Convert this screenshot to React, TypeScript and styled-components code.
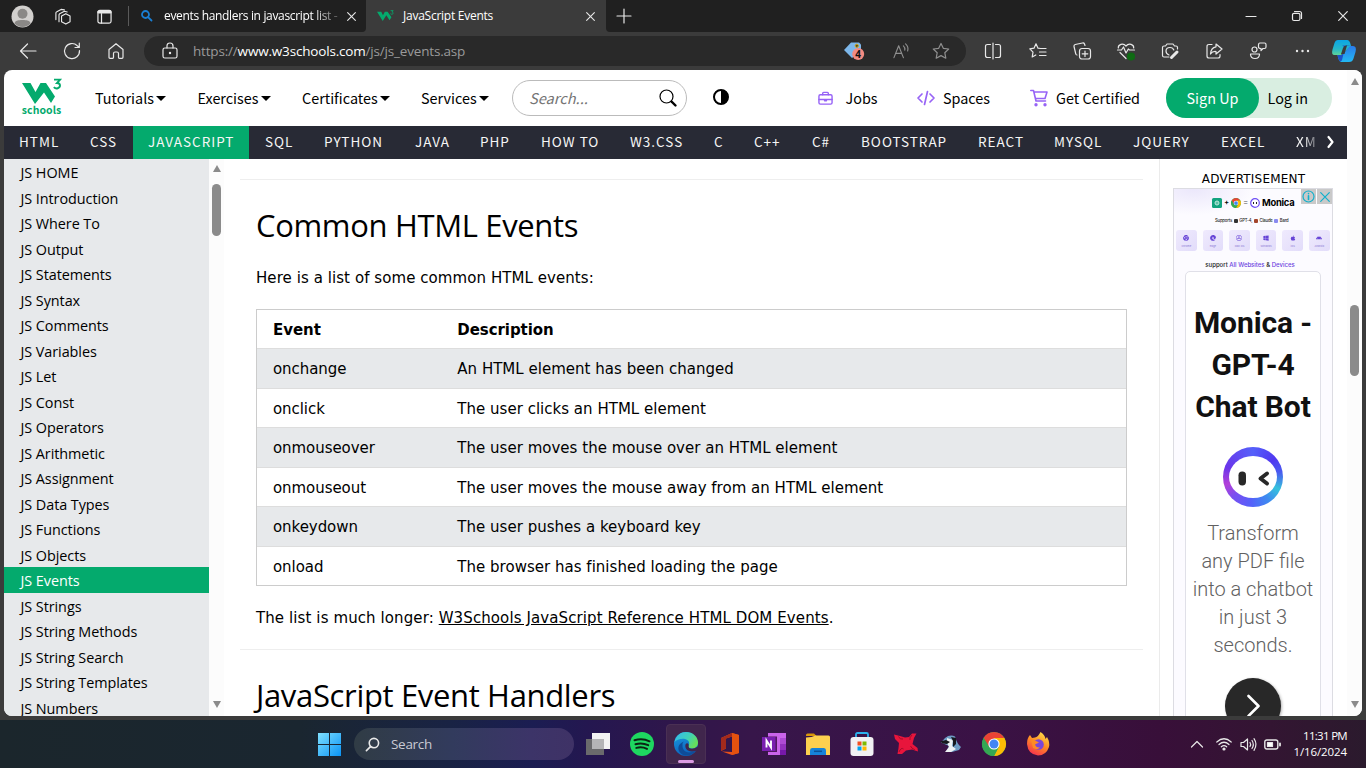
import React from "react";
import styled, { createGlobalStyle, css } from "styled-components";
import { FaAndroid, FaAppStore, FaApple, FaChrome, FaEdge, FaWindows } from "react-icons/fa";

const SOURCE = '"Noto Sans CJK SC", "Noto Sans", sans-serif';
const VERDANA = '"DejaVu Sans", sans-serif';
const SEGOE = '"Open Sans", "Noto Sans", sans-serif';

const Global = createGlobalStyle`
  * { box-sizing: border-box; }
  body { margin: 0; background: #3b3b3b; overflow: hidden; }
  svg { display: block; flex: none; overflow: visible; }
`;

const Screen = styled.div`
  width: 1366px;
  height: 768px;
  display: flex;
  flex-direction: column;
  overflow: hidden;
  background: #3b3b3b;
  font-family: ${SEGOE};
`;

const Icon = styled.svg.attrs({ fill: "none", strokeLinecap: "round", strokeLinejoin: "round" })<{ $size?: number; $color?: string; $stroke?: number }>`
  width: ${(p) => p.$size ?? 18}px;
  height: ${(p) => p.$size ?? 18}px;
  stroke: ${(p) => p.$color ?? "#e8e8e8"};
  stroke-width: ${(p) => p.$stroke ?? 1.2};
`;

const Slot = styled.div<{ $w: number; $lift?: number }>`
  width: ${(p) => p.$w}px;
  flex: none;
  display: flex;
  align-items: center;
  justify-content: center;
  height: 100%;
  padding-bottom: ${(p) => p.$lift ?? 0}px;
`;

/* ---------- tab strip ---------- */
const TabStrip = styled.header`
  height: 32px;
  flex: none;
  display: flex;
  background: #3b3b3b;
`;
const StripLeft = styled.div`
  width: 366px;
  height: 32px;
  display: flex;
  align-items: center;
  background: #202020;
  border-bottom-right-radius: 4px;
`;
const StripRight = styled.div`
  flex: 1;
  height: 32px;
  display: flex;
  align-items: center;
  background: #202020;
  border-bottom-left-radius: 4px;
`;
const StripSpace = styled.div`
  flex: 1;
`;
const StripDivider = styled.div`
  width: 1px;
  height: 20px;
  background: #5a5a5a;
`;
const TabTitle = styled.div<{ $w: number; $pad: number; $fade?: boolean; $ls: number }>`
  width: ${(p) => p.$w}px;
  flex: none;
  padding-left: ${(p) => p.$pad}px;
  white-space: pre;
  font-size: 12px;
  line-height: 18px;
  letter-spacing: ${(p) => p.$ls}px;
  color: #fff;
  ${(p) => p.$fade && css`mask-image: linear-gradient(90deg, #000 82%, rgba(0, 0, 0, 0.3) 94%);`}
`;
const BackTab = styled.div`
  display: flex;
  align-items: center;
  padding-left: 12px;
  width: 238px;
`;
const ActiveTab = styled.div`
  width: 240px;
  height: 32px;
  display: flex;
  align-items: center;
  padding-left: 11px;
  background: #3b3b3b;
`;

/* ---------- toolbar ---------- */
const Toolbar = styled.div`
  height: 38px;
  flex: none;
  display: flex;
  align-items: center;
  padding-left: 6px;
`;
const AddressBar = styled.div`
  width: 822px;
  height: 30px;
  margin: 0 5px 0 6px;
  border-radius: 15px;
  background: #292929;
  display: flex;
  align-items: center;
  padding-left: 17px;
`;
const Url = styled.div`
  width: 651px;
  margin-left: 14px;
  font-size: 13.5px;
  line-height: 20px;
  letter-spacing: -0.18px;
  color: #9a9a9a;
  white-space: nowrap;
  b { font-weight: 400; color: #fff; }
`;

/* ---------- page ---------- */
const Page = styled.main`
  width: 1358px;
  height: 646px;
  margin: 0 4px 4px;
  flex: none;
  display: flex;
  background: #fff;
  border-radius: 8px;
  overflow: hidden;
`;
const PageColumn = styled.div`
  width: 1343px;
  display: flex;
  flex-direction: column;
`;
const SiteHeader = styled.div`
  height: 56px;
  flex: none;
  display: flex;
  align-items: center;
  font-family: ${SOURCE};
  font-size: 14.4px;
  color: #000;
`;
const Logo = styled.div`
  width: 91px;
  padding-left: 17px;
`;
const MenuItem = styled.div<{ $w: number; $gap?: number }>`
  width: ${(p) => p.$w}px;
  flex: none;
  display: flex;
  align-items: center;
  gap: ${(p) => p.$gap ?? 2}px;
  line-height: 20px;
  white-space: nowrap;
`;
const Caret = styled.i`
  border: 5px solid transparent;
  border-top: 5px solid #000;
  border-bottom: 0;
`;
const SearchBox = styled.div`
  width: 175px;
  height: 36px;
  flex: none;
  border: 1px solid #bbb;
  border-radius: 18px;
  display: flex;
  align-items: center;
  justify-content: space-between;
  padding: 0 9px 0 16px;
  font-size: 14.6px;
  line-height: 20px;
  font-style: italic;
  color: #757575;
`;
const Auth = styled.div`
  width: 166px;
  height: 40px;
  display: flex;
  align-items: center;
  line-height: 20px;
  background: #d9eee1;
  border-radius: 20px;
`;
const SignUp = styled.div`
  width: 93px;
  height: 40px;
  line-height: 40px;
  margin-right: 8.5px;
  text-align: center;
  color: #fff;
  background: #04aa6d;
  border-radius: 20px;
`;

const TopicBar = styled.nav`
  height: 33px;
  flex: none;
  display: flex;
  background: #282a35;
  font-family: ${SOURCE};
  font-size: 13.5px;
`;
const Topic = styled.div<{ $w: number; $active?: boolean; $cut?: boolean }>`
  width: ${(p) => p.$w}px;
  height: 33px;
  flex: none;
  padding-left: 15px;
  line-height: 31px;
  letter-spacing: 1px;
  white-space: nowrap;
  color: #f6f6f6;
  ${(p) => p.$active && css`background: #04aa6d; margin-right: 1px;`}
  ${(p) => p.$cut && css`mask-image: linear-gradient(90deg, #000 62%, rgba(0, 0, 0, 0.3));`}
`;

const Body = styled.div`
  flex: 1;
  min-height: 0;
  display: flex;
`;
const Sidebar = styled.div`
  width: 205px;
  flex: none;
  background: #e7e9eb;
  overflow: hidden;
`;
const SideLink = styled.div<{ $active?: boolean }>`
  height: 25.5px;
  padding-left: 16.5px;
  font-size: 14.4px;
  line-height: 27px;
  letter-spacing: -0.06px;
  color: ${(p) => (p.$active ? "#fff" : "#000")};
  background: ${(p) => (p.$active ? "#04aa6d" : "transparent")};
  white-space: nowrap;
`;

const ScrollTrack = styled.div`
  width: 15px;
  flex: none;
  display: flex;
  flex-direction: column;
  align-items: center;
  background: #fcfcfc;
`;
const ScrollArrow = styled.i<{ $down?: boolean; $top: number }>`
  margin-top: ${(p) => p.$top}px;
  border: 4.5px solid transparent;
  ${(p) => (p.$down ? "border-top: 7px solid #8b8b8b; border-bottom: 0;" : "border-bottom: 7px solid #8b8b8b; border-top: 0;")}
`;
const ScrollThumb = styled.div<{ $top: number; $h: number }>`
  width: 9px;
  height: ${(p) => p.$h}px;
  margin-top: ${(p) => p.$top}px;
  border-radius: 4.5px;
  background: #8b8b8b;
`;

const Content = styled.div`
  width: 936px;
  flex: none;
  padding: 20px 16px 0 16px;
  overflow: hidden;
  font-family: ${VERDANA};
  font-size: 15px;
  color: #000;
  border-right: 1px solid #ebebeb;
`;
const Rule = styled.div`
  height: 1px;
  background: #eee;
`;
const Heading = styled.h2`
  margin: 0;
  padding: 21px 0 1px 16px;
  font: 400 31px/48px ${SEGOE};
  letter-spacing: -0.34px;
  white-space: nowrap;
`;
const Para = styled.p<{ $top: number; $bottom: number; $ls: number }>`
  margin: ${(p) => `${p.$top}px 0 ${p.$bottom}px 16px`};
  line-height: 22px;
  letter-spacing: ${(p) => p.$ls}px;
  white-space: nowrap;
`;
const EventTable = styled.div`
  width: 871px;
  margin-left: 16px;
  border: 1px solid #ccc;
`;
const EventRow = styled.div<{ $shade?: boolean; $head?: boolean }>`
  display: flex;
  height: ${(p) => (p.$head ? 39 : 39.5)}px;
  padding-left: 16px;
  line-height: 41px;
  letter-spacing: ${(p) => (p.$head ? -0.06 : 0.02)}px;
  border-bottom: 1px solid #ddd;
  background: ${(p) => (p.$shade ? "#e7e9eb" : "#fff")};
  font-weight: ${(p) => (p.$head ? 700 : 400)};
  &:last-child { border-bottom: 0; height: 38.5px; }
`;
const EventName = styled.span`
  width: 184.3px;
  letter-spacing: -0.06px;
`;

/* ---------- advert ---------- */
const AdColumn = styled.aside`
  flex: 1;
  padding: 13px 14px 0 13px;
  overflow: hidden;
`;
const AdLabel = styled.div`
  margin-bottom: 2px;
  padding-left: 1px;
  text-align: center;
  font: 12px/14px ${VERDANA};
  letter-spacing: 0.2px;
`;
const AdFrame = styled.div`
  width: 160px;
  height: 600px;
  position: relative;
  border: 1px solid #dcdce2;
  background: radial-gradient(ellipse 60px 26px at 20px 0, #ebe7fb, rgba(252, 251, 255, 0)) #fcfbff;
  font-family: Roboto, sans-serif;
`;
const AdBadges = styled.div`
  position: absolute;
  top: 0;
  right: 0;
  display: flex;
  gap: 1px;
`;
const AdBadge = styled.div`
  width: 15px;
  height: 15px;
  background: #c9c9c9;
  display: flex;
  align-items: center;
  justify-content: center;
`;
const AdBrand = styled.div`
  display: flex;
  align-items: center;
  padding: 7px 0 0 38px;
  height: 20px;
  gap: 2px;
  font: 700 9.4px/12px Inter, sans-serif;
  letter-spacing: -0.25px;
`;
const AdMark = styled.span<{ $c: string }>`
  width: 5px;
  font-size: 7px;
  text-align: center;
  color: ${(p) => p.$c};
`;
const AdSupports = styled.div`
  display: flex;
  align-items: center;
  gap: 1.6px;
  height: 10px;
  margin: 7px 0 0 41px;
  font: 500 4.2px/6px Inter, sans-serif;
  letter-spacing: -0.16px;
  color: #222;
`;
const Dot = styled.i<{ $c: string }>`
  width: 4px;
  height: 4px;
  border-radius: 1px;
  background: ${(p) => p.$c};
`;
const AdTiles = styled.div`
  display: flex;
  gap: 6px;
  margin: 4px 0 0 2px;
`;
const AdTile = styled.div`
  width: 20.6px;
  height: 21px;
  flex: none;
  border-radius: 3px;
  background: linear-gradient(135deg, #efeafd, #e2dcfa);
  display: flex;
  flex-direction: column;
  align-items: center;
  padding-top: 5px;
  gap: 3px;
  font: 2.6px/4px Inter, sans-serif;
  color: #8a76d4;
`;
const AdDevices = styled.div`
  margin-top: 10px;
  text-align: center;
  padding-right: 6px;
  font: 500 6px/8px Inter, sans-serif;
  color: #222;
  span { color: #6b3fe0; }
`;
const AdCard = styled.div`
  width: 136px;
  height: 520px;
  margin: 2px 0 0 11px;
  padding-top: 30px;
  display: flex;
  flex-direction: column;
  align-items: center;
  border: 1px solid #e0e0e8;
  border-radius: 5px 5px 0 0;
  background: #fff;
`;
const AdTitle = styled.div`
  font-weight: 700;
  font-size: 30px;
  line-height: 42px;
  letter-spacing: -0.1px;
  text-align: center;
  white-space: pre;
  color: #111;
  margin-bottom: 19px;
`;
const AdText = styled.div`
  margin: 12px 0 19px;
  font-weight: 300;
  font-size: 20px;
  line-height: 28px;
  text-align: center;
  white-space: pre;
  color: #616161;
`;
const AdGo = styled.div`
  width: 56px;
  height: 56px;
  flex: none;
  border-radius: 50%;
  background: #282828;
  display: flex;
  align-items: center;
  justify-content: center;
  box-shadow: 1px 1px 3px rgba(0, 0, 0, 0.3);
`;
const FaceRing = styled.div`
  width: 60px;
  height: 60px;
  flex: none;
  border-radius: 50%;
  display: flex;
  align-items: center;
  justify-content: center;
  background: conic-gradient(#5560fa, #5038f0 50deg, #4a5cf0 80deg, #35c2dc 115deg, #3d8cf0 145deg, #5560fa 185deg, #7a4ef0 225deg, #b23fd8 255deg, #6a35ea 290deg, #5560fa);
`;

/* ---------- taskbar ---------- */
const Taskbar = styled.footer`
  height: 48px;
  flex: none;
  display: flex;
  align-items: center;
  padding-left: 306px;
  background: linear-gradient(90deg, #1b262c 0, #1a2630 22%, #192344 33%, #1b1d52 39%, #241750 43%, #30164a 50%, #37164a 55%, #3a1245 72%, #380f39 85%, #331532 93%, #2b1a2d);
`;
const TaskSearch = styled.div`
  width: 220px;
  height: 32px;
  flex: none;
  margin: 0 2px;
  border-radius: 16px;
  background: linear-gradient(90deg, #303c45, #323b5d 45%, #3c3468 80%, #3f3266);
  display: flex;
  align-items: center;
  gap: 11px;
  padding-left: 11px;
  font-size: 13.5px;
  letter-spacing: -0.3px;
  color: #c9cad3;
`;
const TaskApp = styled.div`
  width: 44px;
  height: 40px;
  flex: none;
  display: flex;
  align-items: center;
  justify-content: center;
`;
const ActiveApp = styled.div`
  width: 40px;
  height: 40px;
  border-radius: 4px;
  border: 1px solid #4a3054;
  background: #40264c;
  display: flex;
  flex-direction: column;
  align-items: center;
  padding-top: 7px;
  gap: 4px;
`;
const ActiveMark = styled.div`
  width: 16px;
  height: 3px;
  border-radius: 2px;
  background: #dc9be4;
`;
const Tray = styled.div`
  margin-left: auto;
  padding-right: 19px;
  display: flex;
  align-items: center;
`;
const Clock = styled.div`
  width: 60px;
  text-align: right;
  font-size: 11.5px;
  line-height: 16px;
  color: #fff;
  white-space: nowrap;
`;
const ClockLine = styled.div<{ $ls: number }>`
  letter-spacing: ${(p) => p.$ls}px;
`;

const topics: [string, number][] = [
  ["HTML", 71], ["CSS", 58], ["JAVASCRIPT", 116], ["SQL", 59], ["PYTHON", 91], ["JAVA", 65], ["PHP", 61],
  ["HOW TO", 89], ["W3.CSS", 84], ["C", 40], ["C++", 58], ["C#", 49], ["BOOTSTRAP", 117], ["REACT", 76],
  ["MYSQL", 79], ["JQUERY", 88], ["EXCEL", 75], ["XM", 36],
];

const sideLinks = [
  "HOME", "Introduction", "Where To", "Output", "Statements", "Syntax", "Comments", "Variables", "Let", "Const",
  "Operators", "Arithmetic", "Assignment", "Data Types", "Functions", "Objects", "Events", "Strings",
  "String Methods", "String Search", "String Templates", "Numbers",
];

const events = [
  ["onchange", "An HTML element has been changed"],
  ["onclick", "The user clicks an HTML element"],
  ["onmouseover", "The user moves the mouse over an HTML element"],
  ["onmouseout", "The user moves the mouse away from an HTML element"],
  ["onkeydown", "The user pushes a keyboard key"],
  ["onload", "The browser has finished loading the page"],
];

const CloseIcon = ({ size = 9, color = "#e8e8e8" }) => (
  <Icon viewBox="0 0 10 10" $size={size} $color={color}><path d="M.7.7l8.6 8.6M9.3.7L.7 9.3" /></Icon>
);

const W3Mark = ({ width = 40, height = 28 }) => (
  <svg width={width} height={height} viewBox="0 0 40 28" fill="none">
    <path d="M0 4H10L14 12 18.5 4H25L34 17 29.5 24 22 12 13.5 26Z" fill="#04aa6d" />
    <path d="M32 1.3H38L35 4.7C37.3 4.7 38 6 38 7.3 38 9.8 34 11 31.8 8.6" stroke="#04aa6d" strokeWidth="1.9" />
  </svg>
);

const Chrome = ({ size = 24 }) => (
  <svg width={size} height={size} viewBox="0 0 24 24">
    <circle cx="12" cy="12" r="12" fill="#34a853" />
    <path d="M1.600 6A12 12 0 0 1 22.400 6L12 7 7 15Z" fill="#ea4335" />
    <path d="M22.400 6A12 12 0 0 1 12 24L17 14.500 12 6Z" fill="#fbbc05" />
    <path d="M1.600 6A12 12 0 0 0 12 24L16.700 15 7.300 15Z" fill="#34a853" />
    <circle cx="12" cy="12" r="5.600" fill="#fff" />
    <circle cx="12" cy="12" r="4.500" fill="#4285f4" />
  </svg>
);

const Edge = () => (
  <svg width="24" height="24" viewBox="0 0 24 24">
    <defs>
      <linearGradient id="e1" x1="0" y1="0" x2="1" y2=".5"><stop stopColor="#35b8f0" /><stop offset=".6" stopColor="#3fd0b8" /><stop offset="1" stopColor="#66e05b" /></linearGradient>
      <linearGradient id="e2" x1="0" y1="0" x2=".4" y2="1"><stop stopColor="#1b9de2" /><stop offset="1" stopColor="#0b62bd" /></linearGradient>
    </defs>
    <circle cx="12" cy="12" r="12" fill="url(#e2)" />
    <path d="M.5 10C2 3 7 0 12 0c7 0 12 5 12 10.500 0 4-3 6-6 6-2.600 0-4-1-3.500-2.500C16 12 15.500 7.500 10 6.800 6 6.500 2 8 .5 10Z" fill="url(#e1)" />
    <path d="M8.500 12.500C8 19 13 22.500 21.500 19 18 24 11 25 7 21.500 2.500 17.500 4 11.500 10 9.500 8.800 10.500 8.500 11.500 8.500 12.500Z" fill="#0f4c98" />
    <path d="M14.600 14C14 16 17 17.400 20.500 16.200L24 14.500V18L21.500 19C14 21 10.500 16.500 11.500 12.500 12.500 10.500 15.200 11 14.600 14Z" fill="#40264c" />
  </svg>
);

const TabBar = () => (
  <TabStrip>
    <StripLeft>
      <Slot $w={44}>
        <svg width="23" height="23" viewBox="0 0 23 23">
          <circle cx="11.500" cy="11.500" r="11" fill="#d2d0ce" />
          <circle cx="11.500" cy="8.800" r="5" fill="#8a8886" />
          <path d="M3.500 18.500C4 15.500 7 15 11.500 15s7.500.5 8 3.500A11 11 0 0 1 3.500 18.500Z" fill="#8a8886" />
        </svg>
      </Slot>
      <Slot $w={36}>
        <Icon viewBox="0 0 18 18" $size={17}>
          <path d="M8 8.500L12.500 6 17 8.500V14.500L12.500 17 8 14.500ZM5.300 14.600V7.500Q5.300 6.500 6 6L11 3.500 14 4.200M2 12.300V5.300Q2 4.500 3 4L7.500 1.500 11 2" />
        </Icon>
      </Slot>
      <Slot $w={48}>
        <Icon viewBox="0 0 16 16" $size={15} $stroke={1.3}><rect x="1" y="1.500" width="14" height="13.500" rx="2" /><path d="M2 3.200H14" strokeWidth="3.400" /><path d="M4.800 5V15" /></Icon>
      </Slot>
      <StripDivider />
      <BackTab>
        <Icon viewBox="0 0 12 12" $size={12} $color="#1a7fd4" $stroke={1.8}><circle cx="4.500" cy="4.500" r="3.500" /><path d="M7.300 7.300L10.500 10.500" /></Icon>
        <TabTitle $w={194} $pad={11} $ls={-0.33} $fade>events handlers in javascript list -</TabTitle>
        <CloseIcon />
      </BackTab>
    </StripLeft>
    <ActiveTab>
      <W3Mark width={17} height={12} />
      <TabTitle $w={192} $pad={9} $ls={-0.25}>JavaScript Events</TabTitle>
      <CloseIcon />
    </ActiveTab>
    <StripRight>
      <Slot $w={35}><Icon viewBox="0 0 14 14" $size={14}><path d="M7 0V14M0 7H14" /></Icon></Slot>
      <StripSpace />
      <Slot $w={46}><Icon viewBox="0 0 10 10" $size={10}><path d="M0 5.500H10" /></Icon></Slot>
      <Slot $w={46}><Icon viewBox="0 0 10 10" $size={10}><rect x=".5" y="2.300" width="7.400" height="7.200" rx="1.500" /><path d="M2.500.5H7.500Q9.500.5 9.500 2.500V7.500" /></Icon></Slot>
      <Slot $w={46}><CloseIcon size={10} /></Slot>
    </StripRight>
  </TabStrip>
);

const Copilot = () => (
  <svg width="24" height="22" viewBox="0 0 24 22">
    <defs>
      <linearGradient id="c1" x1="0" y1="0" x2="0" y2="1"><stop stopColor="#0aa5e6" /><stop offset=".6" stopColor="#27b7c8" /><stop offset="1" stopColor="#5fd597" /></linearGradient>
      <linearGradient id="c2" x1="0" y1="0" x2="0" y2="1"><stop stopColor="#2a7bea" /><stop offset="1" stopColor="#23b9f2" /></linearGradient>
    </defs>
    <path d="M6 0H15Q17.500 0 18.500 4L19 6 9 15H3Q-1 15.500 .5 9.500L2.500 3Q3.500 0 6 0Z" fill="url(#c1)" />
    <path d="M18 6H21Q25 6 23.500 12L21.500 18.500Q20.500 22 17 22H9Q6.500 21 5.500 15H10Z" fill="url(#c2)" />
    <path d="M5.500 15H10L12 9Q12.500 6 10 5.500H19L15 6Q13.500 6 12.500 10L10.500 18Q10 21.500 8 21.500 6.500 20 5.500 15Z" fill="#1c52c8" />
    <path d="M11 8Q12 5 15 5.500L12.500 14H9Z" fill="#3b3b3b" />
  </svg>
);

const PriceTag = styled.svg`
  margin-right: 5px;
`;

const AddressRow = () => (
  <Toolbar>
    <Slot $w={44}><Icon viewBox="0 0 18 18"><path d="M17 9H1.500M8.500 2L1.500 9 8.500 16" /></Icon></Slot>
    <Slot $w={44}><Icon viewBox="0 0 18 18"><path d="M16.500 8.500A7.500 7.500 0 1 1 14.300 3.700L16 5.300M16.300 1.200V5.500H12" /></Icon></Slot>
    <Slot $w={44}><Icon viewBox="0 0 18 18"><path d="M2 7.500L9 1.700 16 7.500V15.300Q16 16.300 15 16.300H12.300Q11.500 16.300 11.500 15.300V11.500Q11.500 10 10 10H8Q6.500 10 6.500 11.500V15.300Q6.500 16.300 5.700 16.300H3Q2 16.300 2 15.300Z" /></Icon></Slot>
    <AddressBar>
      <Icon viewBox="0 0 18 18"><rect x="2" y="6" width="14" height="10" rx="1.800" /><path d="M6 6V4Q6 1 9 1T12 4V6" /><circle cx="9" cy="11" r=".6" fill="#e8e8e8" /></Icon>
      <Url>https://<b>www.w3schools.com</b>/js/js_events.asp</Url>
      <PriceTag width="22" height="20" viewBox="0 0 22 20">
        <path d="M0 9L7 1.500H15L17 3.500V10L8 17Z" fill="#7db7ea" />
        <circle cx="12.800" cy="4.800" r="1.600" fill="#4b4f2a" stroke="#d9a514" />
        <circle cx="14.200" cy="13" r="6" fill="#f28b82" />
        <text x="14.200" y="16.700" fontSize="10" fontWeight="700" textAnchor="middle" fill="#111">4</text>
      </PriceTag>
      <Slot $w={60}><Icon viewBox="0 0 18 18" $size={17} $color="#8f8f8f"><path d="M1 15.500L6 3 11 15.500M2.800 11H9.200M11 3Q13 4.800 12.500 7.500M13.300 1Q16.800 4 15.500 8.500" /></Icon></Slot>
      <Slot $w={19}><Icon viewBox="0 0 18 18" $color="#8f8f8f"><path d="M9 1.500L11.300 6.300 16.700 7 12.800 10.700 13.800 16.200 9 13.600 4.200 16.200 5.200 10.700 1.300 7 6.700 6.300Z" /></Icon></Slot>
    </AddressBar>
    <Slot $w={44}><Icon viewBox="0 0 18 18"><path d="M6.500 2.500H3.500Q1.500 2.500 1.500 4.500V13.500Q1.500 15.500 3.500 15.500H6.500M11.500 2.500H14.500Q16.500 2.500 16.500 4.500V13.500Q16.500 15.500 14.500 15.500H11.500M9 1V17" /></Icon></Slot>
    <Slot $w={45}><Icon viewBox="0 0 18 18"><path d="M11.500 6.500L9 6.200 7 1.800 5 6.200 .8 6.800 4 10.200 3.200 15 6.800 13M11.500 6.500H17M10.500 10H17M10.500 13.500H17" /></Icon></Slot>
    <Slot $w={44}><Icon viewBox="0 0 18 18"><rect x="6.500" y="6.500" width="11" height="10.500" rx="2.500" /><path d="M12 9V14.500M9.200 11.800H14.800M4 13Q3 13 2.800 12L1 4.500Q.7 3 2.200 2.500L9.500 1Q11 .7 11.500 2L12 3.500" /></Icon></Slot>
    <Slot $w={44}><Icon viewBox="0 0 18 18"><path d="M1.300 6C1 2.500 6 .5 9 4 12 .5 17 2.500 16.700 6M3 10.500L9 16.500M.5 8H4.500L6.500 5 9 11 11.300 7 12.500 8H17.500" /><circle cx="14" cy="14.500" r="3.500" fill="#0f6b14" stroke="#0f6b14" /></Icon></Slot>
    <Slot $w={44}><Icon viewBox="0 0 18 18"><path d="M8 15H3Q1.500 15 1.500 13.500V5.500Q1.500 4 3 4H4.500L6 2H12L13.500 4H15Q16.500 4 16.500 5.500V7M8 13Q5 12 5 9 5 5.500 9 5.500 12 5.500 12.800 8" /><path d="M10.500 15.500L16 10" strokeWidth="3" /></Icon></Slot>
    <Slot $w={44}><Icon viewBox="0 0 18 18"><path d="M7 2.500H4Q2 2.500 2 4.500V14Q2 16 4 16H13Q15 16 15 14V12.500M11 2L17 7 11 12V9.500Q7.500 9 5.500 12 6 5.500 11 4.800Z" /></Icon></Slot>
    <Slot $w={44}><Icon viewBox="0 0 18 18"><circle cx="5.500" cy="7.500" r="2.500" /><path d="M1.500 12H10.500Q10.500 16.500 6 16.500T1.500 12ZM9.500 3Q9.500 1 11 1H15.500Q17 1 17 2.500V5Q17 6.500 15.500 6.500H14L12 8.500V6.500Q9.500 6.500 9.500 5Z" /></Icon></Slot>
    <Slot $w={43}><Icon viewBox="0 0 18 18"><g fill="#e8e8e8" stroke="none"><circle cx="4" cy="9" r="1.200" /><circle cx="9.500" cy="9" r="1.200" /><circle cx="15" cy="9" r="1.200" /></g></Icon></Slot>
    <Slot $w={42}><Copilot /></Slot>
  </Toolbar>
);

const violet = "#9763f6";

const Header = () => (
  <SiteHeader>
    <Logo>
      <svg width="42" height="40" viewBox="0 0 42 40">
        <g transform="translate(1 1)">
          <path d="M0 4H8.500L13.500 13 18.500 4H24L33 17.500 29 24 22 13.500 13 25Z" fill="#04aa6d" />
          <path d="M32 .6H38L35 4C37.300 4 38 5.400 38 6.600 38 9.400 34 10.400 31.800 8.200" stroke="#04aa6d" strokeWidth="1.900" fill="none" />
        </g>
        <text x="0.800" y="36" fontSize="10.500" fontWeight="700" fill="#04aa6d" textLength="39.500" fontFamily={SOURCE}>schools</text>
      </svg>
    </Logo>
    <MenuItem $w={102.5}>Tutorials<Caret /></MenuItem>
    <MenuItem $w={104.5}>Exercises<Caret /></MenuItem>
    <MenuItem $w={119}>Certificates<Caret /></MenuItem>
    <MenuItem $w={91}>Services<Caret /></MenuItem>
    <SearchBox>
      Search...
      <Icon viewBox="0 0 18 18" $color="#000"><circle cx="7.500" cy="7.500" r="6.500" /><path d="M12.500 12.500L16.500 16.500" strokeWidth="2.400" /></Icon>
    </SearchBox>
    <Slot $w={68} $lift={2}>
      <svg width="16" height="16" viewBox="0 0 16 16"><circle cx="8" cy="8" r="7" fill="#fff" stroke="#000" strokeWidth="2" /><path d="M8 1A7 7 0 0 1 8 15Z" fill="#000" /></svg>
    </Slot>
    <Slot $w={63} />
    <MenuItem $w={99} $gap={12.5}>
      <Icon viewBox="0 0 16 16" $size={15} $color={violet} $stroke={1.5}><rect x="1" y="4" width="14" height="10" rx="1.500" /><path d="M5 4V2.500Q5 1.500 6 1.500H10Q11 1.500 11 2.500V4M1 9H15M7 9V10.500H9V9" /></Icon>Jobs
    </MenuItem>
    <MenuItem $w={113} $gap={8}>
      <Icon viewBox="0 0 18 16" $size={18} $color={violet} $stroke={1.7}><path d="M5 4L1 8 5 12M13 4L17 8 13 12M10.500 1.500L7.500 14.500" /></Icon>Spaces
    </MenuItem>
    <MenuItem $w={136} $gap={8}>
      <Icon viewBox="0 0 18 18" $color={violet} $stroke={1.6}><path d="M.8 1.500H3.500L6 12H15.500M3.700 3H17L15 9.500H5.500" /><circle cx="6" cy="15.800" r=".9" fill={violet} /><circle cx="15" cy="15.800" r=".9" fill={violet} /></Icon>Get Certified
    </MenuItem>
    <Auth><SignUp>Sign Up</SignUp>Log in</Auth>
  </SiteHeader>
);

const platforms = [
  { name: "Chrome", Glyph: FaChrome },
  { name: "Edge", Glyph: FaEdge },
  { name: "Mac OS", Glyph: FaAppStore },
  { name: "Windows", Glyph: FaWindows },
  { name: "iOS", Glyph: FaApple },
  { name: "Android", Glyph: FaAndroid },
];

const MonicaFace = () => (
  <FaceRing>
    <svg width="48" height="42" viewBox="0 0 48 42">
      <ellipse cx="24" cy="21" rx="24" ry="21" fill="#fff" />
      <rect x="9.500" y="15.500" width="7.500" height="14" rx="3.700" fill="#282828" />
      <path d="M38 17.500L31.500 22.500 38 27.500" fill="none" stroke="#282828" strokeWidth="4" strokeLinecap="round" strokeLinejoin="round" />
    </svg>
  </FaceRing>
);

const Advert = () => (
  <AdColumn>
    <AdLabel>ADVERTISEMENT</AdLabel>
    <AdFrame>
      <AdBadges>
        <AdBadge><Icon viewBox="0 0 13 13" $size={13} $color="#12b0cc"><circle cx="6.500" cy="6.500" r="5.500" /><path d="M6.500 5.800V9.500M6.500 3.500V3.600" strokeWidth="1.600" /></Icon></AdBadge>
        <AdBadge><CloseIcon size={10} color="#12b0cc" /></AdBadge>
      </AdBadges>
      <AdBrand>
        <svg width="10" height="10" viewBox="0 0 10 10"><rect width="10" height="10" rx="1.500" fill="#12a37f" /><circle cx="5" cy="5" r="2" fill="#5cc2a8" stroke="#bfe9dd" /></svg>
        <AdMark $c="#000">+</AdMark>
        <Chrome size={10} />
        <AdMark $c="#888">=</AdMark>
        <svg width="10" height="10" viewBox="0 0 10 10"><circle cx="5" cy="5" r="4.300" fill="#fff" stroke="#6c4df5" strokeWidth="1.200" /><path d="M3.500 4V6M6.500 4V6" stroke="#222" /></svg>
        Monica
      </AdBrand>
      <AdSupports>Supports <Dot $c="#333" /> GPT-4, <Dot $c="#a3452c" /> Claude <Dot $c="#8a8af0" /> Bard</AdSupports>
      <AdTiles>
        {platforms.map(({ name, Glyph }) => (
          <AdTile key={name}><Glyph size={6} color="#6644d6" />{name}</AdTile>
        ))}
      </AdTiles>
      <AdDevices>support <span>All Websites</span> &amp; <span>Devices</span></AdDevices>
      <AdCard>
        <AdTitle>{"Monica -\nGPT-4\nChat Bot"}</AdTitle>
        <MonicaFace />
        <AdText>{"Transform\nany PDF file\ninto a chatbot\nin just 3\nseconds."}</AdText>
        <AdGo><Icon viewBox="0 0 24 24" $size={24} $color="#fff" $stroke={2.6}><path d="M7.500 2L17.500 12 7.500 22" /></Icon></AdGo>
      </AdCard>
    </AdFrame>
  </AdColumn>
);

const TaskIcons = () => (
  <>
    <TaskApp><svg width="24" height="24" viewBox="0 0 24 24"><path d="M6 1H24V17H6Z" fill="#f2f2f2" /><path d="M0 7H18V23H0Z" fill="#6a6a6c" /><path d="M6 7H18V17H6Z" fill="#b4b4b6" /></svg></TaskApp>
    <TaskApp><svg width="24" height="24" viewBox="0 0 24 24"><circle cx="12" cy="12" r="12" fill="#1ed760" /><path d="M4.500 8.300Q12.500 5.800 19.500 9.300M5.500 12.200Q12 10.200 18.200 13.200M6.300 15.900Q12 14.300 17 16.900" fill="none" stroke="#0b2414" strokeWidth="2" strokeLinecap="round" /></svg></TaskApp>
    <TaskApp><ActiveApp><Edge /><ActiveMark /></ActiveApp></TaskApp>
    <TaskApp><svg width="20" height="24" viewBox="0 0 20 24"><path d="M1 6L12 1 19 3V21L12 23 2 19.500 12 20V4.500L6 6.500V16.500L1 19Z" fill="#e8501a" /><path d="M1 6L12 1V4.500L6 6.500V16.500L1 19Z" fill="#a32a1c" /><path d="M12 1L19 3V21L12 23Z" fill="#e5520f" /></svg></TaskApp>
    <TaskApp><svg width="24" height="24" viewBox="0 0 24 24"><path d="M6 1H24V23H6Z" fill="#ca64ea" /><path d="M18 6H24V12H18Z" fill="#ae4bd5" /><path d="M18 12H24V17.500H18Z" fill="#9332bf" /><path d="M18 17.500H24V23H18Z" fill="#7719aa" /><path d="M6 4.500H15V20H6Z" fill="#52185f" /><path d="M0 5H13.500V19H0Z" fill="#7a1fb0" /><path d="M4.500 15.500V8.500L9 15.500V8.500" fill="none" stroke="#fff" strokeWidth="1.900" /></svg></TaskApp>
    <TaskApp><svg width="24" height="24" viewBox="0 0 24 24"><path d="M0 3Q0 1.500 1.500 1.500H8L10.500 4H0Z" fill="#d9960a" /><path d="M0 5.500Q6 5.500 9.500 3.500H22.500Q24 3.500 24 5V23H0Z" fill="#fdd04f" /><path d="M4 23V18.500Q4 16 6 16H18Q20 16 20 18.500V23Z" fill="#1683d8" /><path d="M8 19.300H16" stroke="#0b5296" strokeWidth="1.500" /></svg></TaskApp>
    <TaskApp><svg width="24" height="24" viewBox="0 0 24 24"><path d="M6 6V2.500Q6 1 7.500 1H16.500Q18 1 18 2.500V6" fill="none" stroke="#2cb3ee" strokeWidth="1.800" /><rect x=".5" y="5" width="23" height="19" rx="3" fill="#f1f1f3" /><path d="M7.500 9.500H11.500V13.500H7.500Z" fill="#f25022" /><path d="M12.500 9.500H16.500V13.500H12.500Z" fill="#7fba00" /><path d="M7.500 14.500H11.500V18.500H7.500Z" fill="#00a4ef" /><path d="M12.500 14.500H16.500V18.500H12.500Z" fill="#ffb900" /></svg></TaskApp>
    <TaskApp><svg width="24" height="24" viewBox="0 0 24 24"><path d="M0 2.500L6 4 11 5.500 15 5 18 1.500 22.500 1.500 20 6 18.500 12 23.500 16 24 19.500 18 17.500 12 18.500 8 22 3.500 22 4.500 16 5 11 1 7Z" fill="#e8153c" /><path d="M4.500 4.500Q6 8 9 7M18 3Q15 6 16 8M5 20Q7 15 9.500 17M21 18Q17 16 16.500 14" stroke="#a30c2a" fill="none" /></svg></TaskApp>
    <TaskApp><svg width="24" height="24" viewBox="0 0 24 24"><path d="M7 6Q12 2 17 4.500 19 12 23 15L21 18 14 20H8L11 14 3 10.500Z" fill="#6f9cc4" /><path d="M9 6L15 8 14 14 18 17 13 20H7L11 15 9 11Z" fill="#eef2f4" /><path d="M2 9.500L8 8 12 10 9 12 5 11.500ZM13 5L18 6 18 12 15 15 15 9Z" fill="#16181d" /></svg></TaskApp>
    <TaskApp><Chrome /></TaskApp>
    <TaskApp><svg width="24" height="24" viewBox="0 0 24 24"><defs><linearGradient id="ff" x1=".8" y1="0" x2=".3" y2="1"><stop stopColor="#ffe24a" /><stop offset=".5" stopColor="#ff8a24" /><stop offset="1" stopColor="#f5304f" /></linearGradient></defs><path d="M1 12Q1 6 4 3L6 6 9 5.500Q12 5 14.500 0 19 3 19.500 7L21 5Q24 10 23 15 20 23.500 12 23.500 2 22.500 1 12Z" fill="url(#ff)" /><circle cx="12.500" cy="12.500" r="5.300" fill="#7c46d8" /><path d="M5 8Q9 7.500 13 10.500L9 12.500Q10 16 14 15.500 11 18.500 7 16Z" fill="#ff8a24" /></svg></TaskApp>
  </>
);

const App = () => (
  <Screen>
    <Global />
    <TabBar />
    <AddressRow />
    <Page>
      <PageColumn>
        <Header />
        <TopicBar>
          {topics.map(([name, w]) => (
            <Topic key={name} $w={w} $active={name === "JAVASCRIPT"} $cut={name === "XM"}>{name}</Topic>
          ))}
          <Slot $w={27} $lift={1}><Icon viewBox="0 0 10 10" $size={10} $color="#fff" $stroke={2.2}><path d="M2.500 0L6.500 5 2.500 10" /></Icon></Slot>
        </TopicBar>
        <Body>
          <Sidebar>
            {sideLinks.map((s) => <SideLink key={s} $active={s === "Events"}>JS {s}</SideLink>)}
          </Sidebar>
          <ScrollTrack>
            <ScrollArrow $top={6} />
            <ScrollThumb $top={12} $h={52} />
            <ScrollArrow $top={465} $down />
          </ScrollTrack>
          <Content>
            <Rule />
            <Heading>Common HTML Events</Heading>
            <Para $top={17} $bottom={20} $ls={0.07}>Here is a list of some common HTML events:</Para>
            <EventTable>
              <EventRow $head><EventName>Event</EventName>Description</EventRow>
              {events.map(([n, d], i) => (
                <EventRow key={n} $shade={i % 2 === 0}><EventName>{n}</EventName>{d}</EventRow>
              ))}
            </EventTable>
            <Para $top={21} $bottom={20} $ls={0.1}>The list is much longer: <u>W3Schools JavaScript Reference HTML DOM Events</u>.</Para>
            <Rule />
            <Heading>JavaScript Event Handlers</Heading>
          </Content>
          <Advert />
        </Body>
      </PageColumn>
      <ScrollTrack>
        <ScrollArrow $top={8} />
        <ScrollThumb $top={220} $h={71} />
        <ScrollArrow $top={325} $down />
      </ScrollTrack>
    </Page>
    <Taskbar>
      <Slot $w={46}>
        <svg width="23" height="23" viewBox="0 0 23 23">
          <defs><linearGradient id="win" x1="0" y1="0" x2="1" y2="1"><stop stopColor="#7fe0ff" /><stop offset="1" stopColor="#0a93f5" /></linearGradient></defs>
          <path d="M0 0H11V11H0ZM12 0H23V11H12ZM0 12H11V23H0ZM12 12H23V23H12Z" fill="url(#win)" />
        </svg>
      </Slot>
      <TaskSearch>
        <Icon viewBox="0 0 16 16" $size={15} $stroke={1.7}><circle cx="9.500" cy="6.500" r="5" /><path d="M5.800 10.200L1.500 14.500" /></Icon>
        Search
      </TaskSearch>
      <TaskIcons />
      <Tray>
        <Slot $w={25}><Icon viewBox="0 0 12 7" $size={12}><path d="M.5 6.500L6 1 11.500 6.500" /></Icon></Slot>
        <Slot $w={30}><Icon viewBox="0 0 16 14" $size={16}><path d="M.8 5Q8-1.500 15.200 5M3 7.500Q8 3 13 7.500M5.300 9.800Q8 7.500 10.700 9.800" /><circle cx="8" cy="12" r="1" fill="#fff" /></Icon></Slot>
        <Slot $w={18}><Icon viewBox="0 0 17 14" $size={17}><path d="M1 5H3.500L7.500 1.500V12.500L3.500 9H1ZM10 5Q11.300 7 10 9M12 3Q14.600 7 12 11M14 1.200Q18 7 14 12.800" /></Icon></Slot>
        <Slot $w={30}><Icon viewBox="0 0 17 12" $size={17}><rect x=".8" y="1.500" width="13" height="9" rx="2" strokeWidth="1.400" /><path d="M3.500 4H8.500V8H3.500Z" fill="#fff" /><path d="M16 5V7" strokeWidth="1.800" /></Icon></Slot>
        <Clock>
          <ClockLine $ls={-0.7}>11:31 PM</ClockLine>
          <ClockLine $ls={-0.1}>1/16/2024</ClockLine>
        </Clock>
      </Tray>
    </Taskbar>
  </Screen>
);

export default App;
